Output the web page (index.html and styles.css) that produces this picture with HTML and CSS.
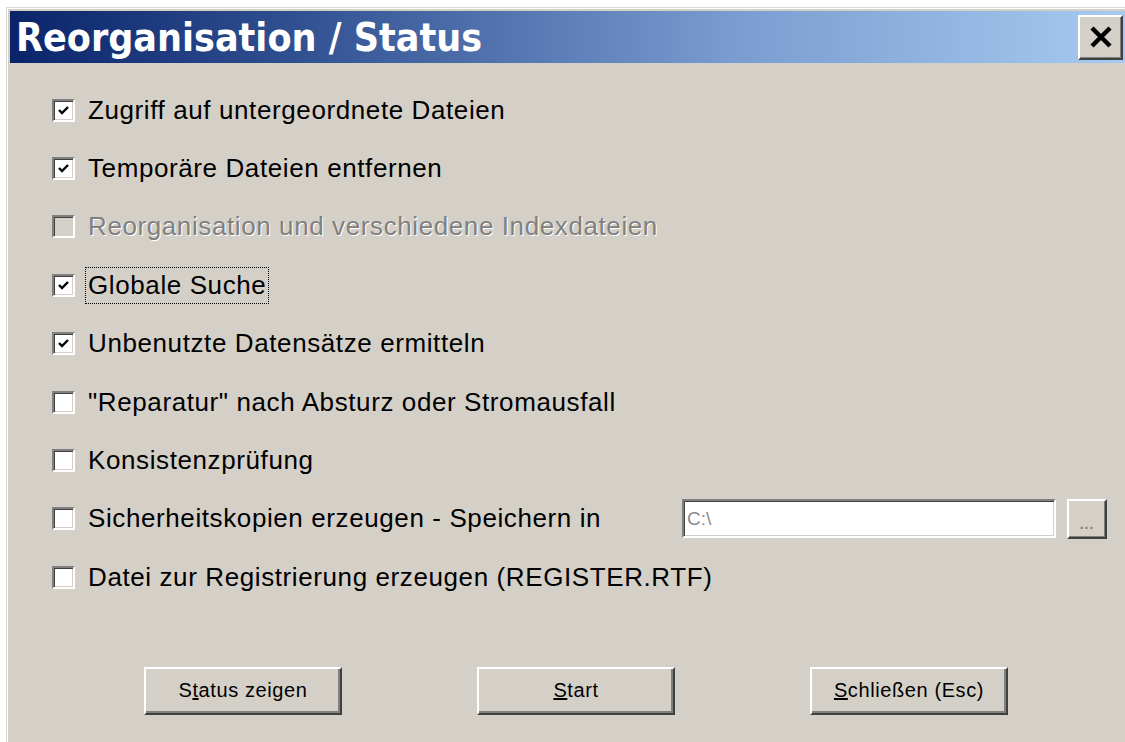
FILE: index.html
```html
<!DOCTYPE html>
<html lang="de">
<head>
<meta charset="utf-8">
<title>Reorganisation / Status</title>
<link rel="stylesheet" href="styles.css">
</head>
<body>
<div class="window">
  <div class="frame">
    <header class="titlebar">
      <h1 class="title">Reorganisation / Status</h1>
      <button class="close" type="button" aria-label="Schließen">
        <svg width="24" height="22" viewBox="0 0 24 22"><path d="M3 2 L21 20 M21 2 L3 20" stroke="#000" stroke-width="4.5" fill="none"/></svg>
      </button>
    </header>
    <main class="content">
      <ul class="options">
        <li class="option"><span class="box checked"><svg class="tick" width="11" height="9" viewBox="0 0 11 9"><path d="M1 4 L4 7 L10 1" stroke="#000" stroke-width="2.4" fill="none"/></svg></span><span class="label">Zugriff auf untergeordnete Dateien</span></li>
        <li class="option"><span class="box checked"><svg class="tick" width="11" height="9" viewBox="0 0 11 9"><path d="M1 4 L4 7 L10 1" stroke="#000" stroke-width="2.4" fill="none"/></svg></span><span class="label">Temporäre Dateien entfernen</span></li>
        <li class="option disabled"><span class="box"></span><span class="label">Reorganisation und verschiedene Indexdateien</span></li>
        <li class="option"><span class="box checked"><svg class="tick" width="11" height="9" viewBox="0 0 11 9"><path d="M1 4 L4 7 L10 1" stroke="#000" stroke-width="2.4" fill="none"/></svg></span><span class="label focused">Globale Suche</span></li>
        <li class="option"><span class="box checked"><svg class="tick" width="11" height="9" viewBox="0 0 11 9"><path d="M1 4 L4 7 L10 1" stroke="#000" stroke-width="2.4" fill="none"/></svg></span><span class="label">Unbenutzte Datensätze ermitteln</span></li>
        <li class="option"><span class="box"></span><span class="label">"Reparatur" nach Absturz oder Stromausfall</span></li>
        <li class="option"><span class="box"></span><span class="label">Konsistenzprüfung</span></li>
        <li class="option with-path">
          <span class="box"></span><span class="label">Sicherheitskopien erzeugen - Speichern in</span>
          <span class="path-field">C:\</span>
          <button class="browse" type="button">...</button>
        </li>
        <li class="option"><span class="box"></span><span class="label">Datei zur Registrierung erzeugen (REGISTER.RTF)</span></li>
      </ul>
      <div class="actions">
        <button class="btn" type="button">S<u>t</u>atus zeigen</button>
        <button class="btn" type="button"><u>S</u>tart</button>
        <button class="btn" type="button"><u>S</u>chließen (Esc)</button>
      </div>
    </main>
  </div>
</div>
</body>
</html>
```

FILE: styles.css
```css
html, body {
  margin: 0;
  padding: 0;
}

body {
  background: #ffffff;
  width: 1125px;
  height: 742px;
  overflow: hidden;
}

/* Dialog window with the classic light outer edge */
.window {
  margin: 7px 0 0 6px;
  border-top: 1px solid #dcd9d3;
  border-left: 1px solid #dcd9d3;
  height: 735px;
}

.frame {
  border-top: 1px solid #ffffff;
  border-left: 1px solid #ffffff;
  background: #d4d0c8;
  padding: 2px 0 0 2px;
  height: 100%;
  box-sizing: border-box;
}

/* Title bar */
.titlebar {
  display: flex;
  align-items: center;
  height: 52px;
  padding: 0 2px 0 6px;
  background: linear-gradient(90deg, #0a246a 0%, #2f4f90 25%, #7a9cd0 65%, #a6caf0 100%);
}

.title {
  margin: 0;
  color: #ffffff;
  font-family: "DejaVu Sans Condensed", "DejaVu Sans", sans-serif;
  font-weight: bold;
  font-size: 39px;
  line-height: 1;
}

.close {
  margin-left: auto;
  width: 45px;
  height: 45px;
  padding: 0;
  display: flex;
  align-items: center;
  justify-content: center;
  background: #d4d0c8;
  border: 2px solid;
  border-color: #ffffff #404040 #404040 #ffffff;
  box-shadow: inset -1px -1px 0 #808080;
}

/* Option list */
.content {
  padding: 18px 0 0 42px;
}

.options {
  list-style: none;
  margin: 0;
  padding: 0;
}

.option {
  display: flex;
  align-items: center;
  height: 58.4px;
  font-family: "Liberation Sans", Arial, sans-serif;
  font-size: 26px;
  letter-spacing: 0.6px;
  color: #000000;
}

.box {
  flex: 0 0 auto;
  width: 23px;
  height: 23px;
  box-sizing: border-box;
  background: #ffffff;
  border: 2px solid;
  border-color: #808080 #ffffff #ffffff #808080;
  box-shadow: inset 1px 1px 0 #404040, inset -1px -1px 0 #d4d0c8;
  display: flex;
  align-items: center;
  justify-content: center;
}

.label {
  margin-left: 13px;
  white-space: nowrap;
}

.label.focused {
  outline: 1px dotted #000000;
  outline-offset: 2px;
}

.option.disabled .box {
  background: #d4d0c8;
}

.option.disabled .label {
  color: #808080;
  text-shadow: 1px 1px 0 #ffffff;
}

/* Backup path */
.with-path {
  padding-right: 18px;
}

.path-field {
  margin-left: auto;
  width: 374px;
  height: 39px;
  box-sizing: border-box;
  background: #ffffff;
  border: 2px solid;
  border-color: #808080 #ffffff #ffffff #808080;
  box-shadow: inset 1px 1px 0 #404040, inset -1px -1px 0 #d4d0c8;
  color: #8a8a8a;
  font-size: 19px;
  letter-spacing: 0;
  padding: 7px 0 0 3px;
}

.browse {
  margin-left: 11px;
  width: 40px;
  height: 40px;
  padding: 10px 0 0;
  background: #d4d0c8;
  border: 2px solid;
  border-color: #ffffff #404040 #404040 #ffffff;
  box-shadow: inset -1px -1px 0 #808080;
  color: #808080;
  font-family: "Liberation Sans", sans-serif;
  font-size: 14px;
  font-weight: bold;
  letter-spacing: 1px;
}

/* Command buttons */
.actions {
  display: flex;
  gap: 135px;
  margin: 60px 0 0 92px;
}

.btn {
  width: 198px;
  height: 48px;
  padding: 0;
  background: #d4d0c8;
  border: 2px solid;
  border-color: #ffffff #404040 #404040 #ffffff;
  box-shadow: inset -2px -2px 0 #808080;
  font-family: "Liberation Sans", Arial, sans-serif;
  font-size: 20px;
  letter-spacing: 0.6px;
  color: #000000;
}
```
